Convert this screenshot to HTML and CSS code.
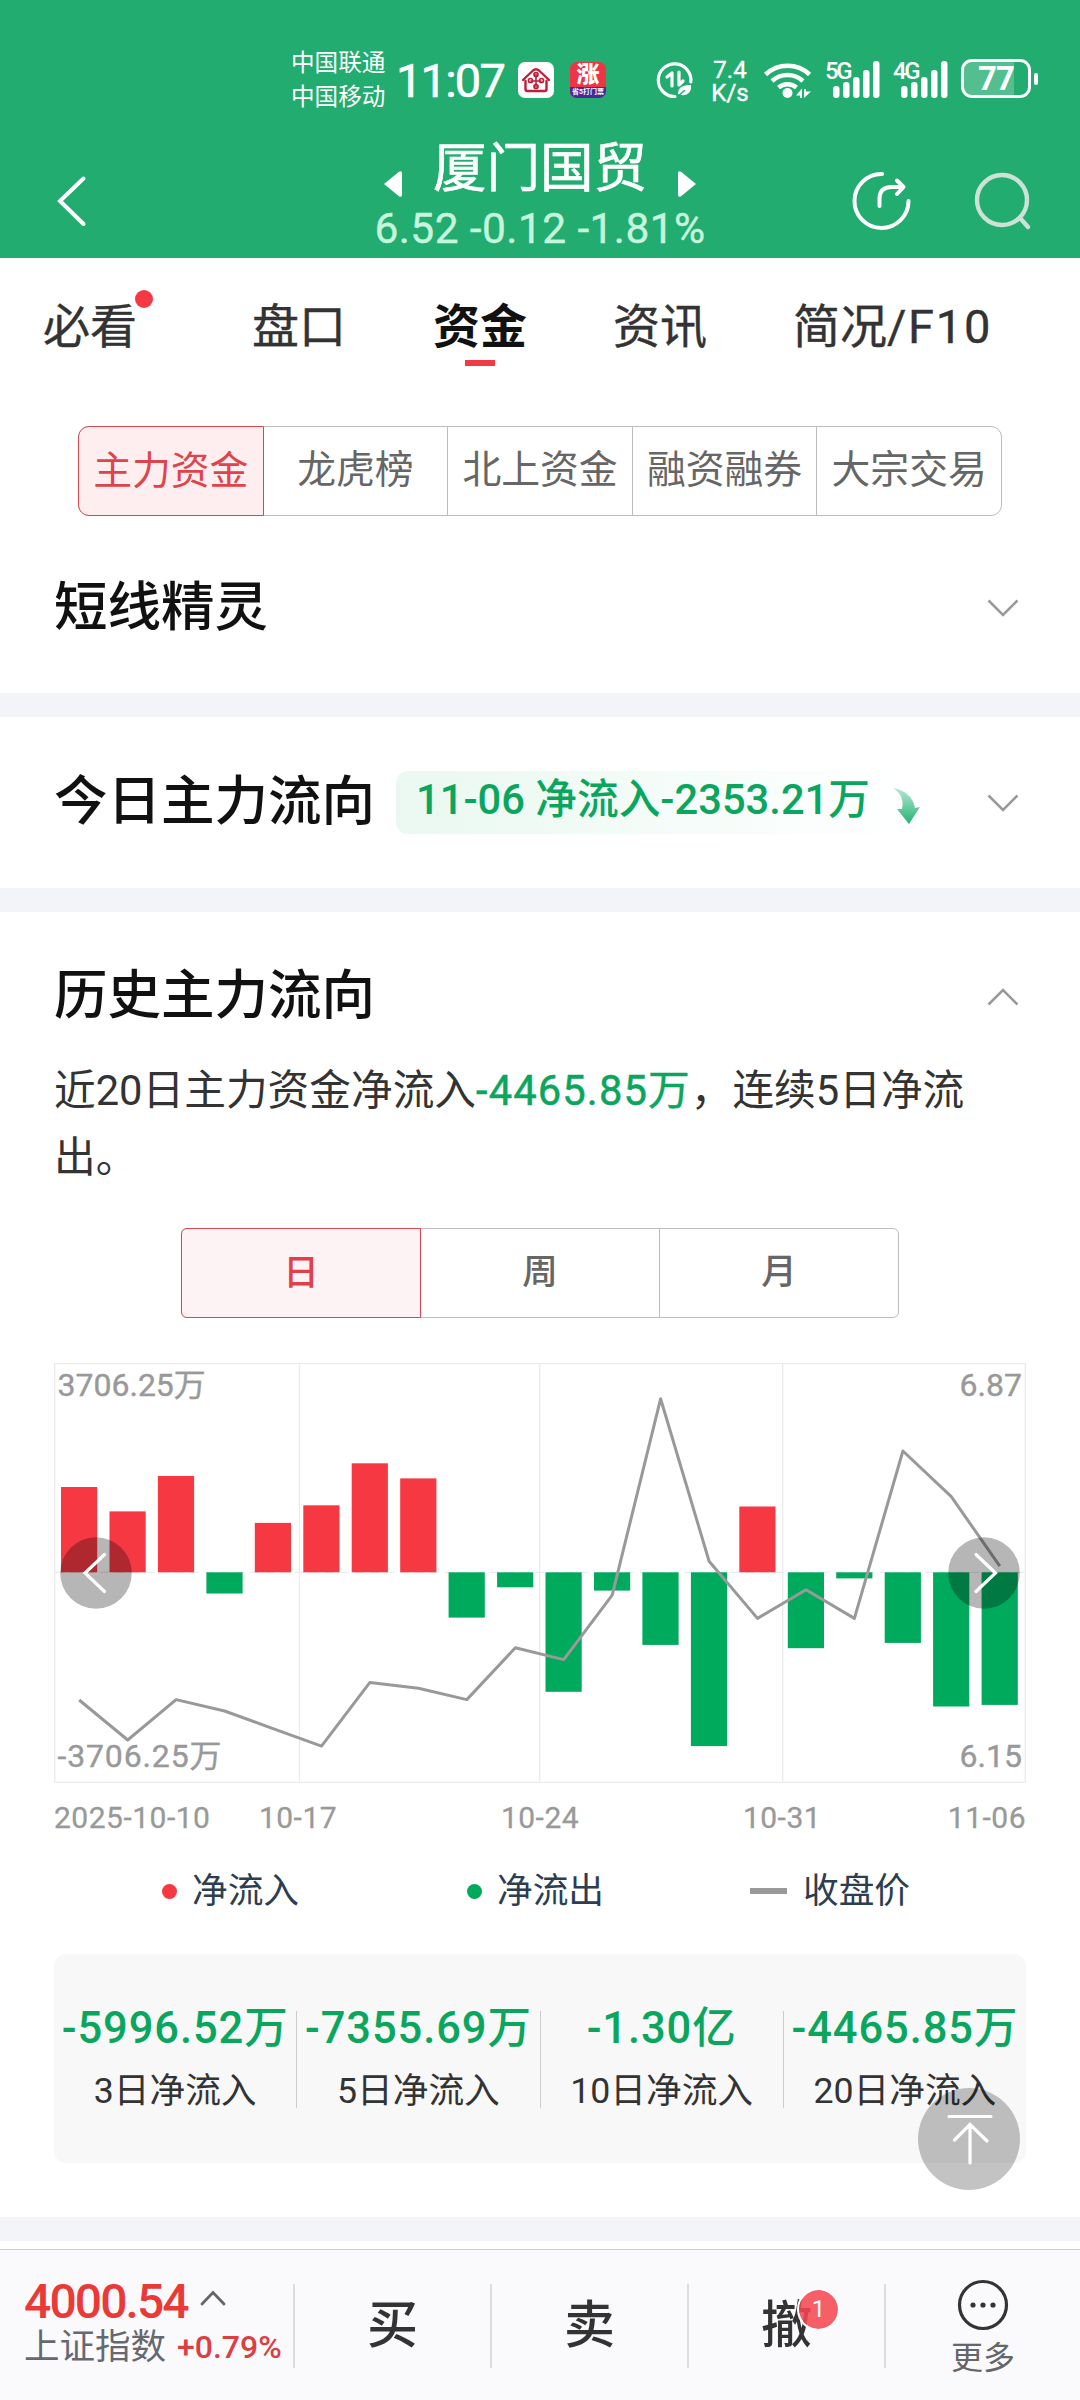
FILE: index.html
```html
<!DOCTYPE html>
<html lang="zh-CN">
<head>
<meta charset="utf-8">
<title>厦门国贸 资金</title>
<link rel="stylesheet" href="styles.css">
</head>
<body>
<header class="header">
  <div class="status">
    <div class="carriers"><span>中国联通</span><span>中国移动</span></div>
    <div class="clock">11:07</div>
    <svg class="app-icon" width="36" height="36" viewBox="0 0 36 36">
      <rect width="36" height="36" rx="7" fill="#fff"/>
      <g fill="none" stroke="#c01f3a" stroke-width="2.4" stroke-linejoin="round" stroke-linecap="round">
        <path d="M5 18 15 8.5Q18 6 21 8.500L31 18M7.500 19v8q0 2 2 2h17q2 0 2-2v-8"/>
        <path stroke-width="1.600" d="M13 19h10M18 12v13"/>
        <g stroke-width="1.700"><circle cx="18" cy="12.500" r="2"/><circle cx="18" cy="24.500" r="2"/><circle cx="12.500" cy="18.500" r="2"/><circle cx="23.500" cy="18.500" r="2"/></g>
      </g>
    </svg>
    <div class="rise-icon"><span class="rise-char">涨</span><span class="rise-base">省5打门票</span></div>
    <svg class="data-icon" width="38" height="38" viewBox="0 0 38 38" fill="none" stroke="#fff" stroke-width="3.200" stroke-linecap="round" stroke-linejoin="round">
      <path d="M19 35.500A16.300 16.300 0 1 1 34.800 21"/>
      <path d="M11 16l5-4v13M23 11v13l4-4"/>
      <path d="M22 33c0-7 5-9 13-9 1 7-4 11-10 10z" fill="#fff" stroke="none"/>
      <path d="M21.500 35.500l7-6" stroke="#22ac6f" stroke-width="1.500"/>
    </svg>
    <div class="speed"><span>7.4</span><span>K/s</span></div>
    <svg class="wifi" width="48" height="38" viewBox="0 0 48 38" fill="none" stroke="#fff" stroke-width="4.600">
      <path d="M1.600 13.500a32 32 0 0 1 44 0"/><path d="M8 20a23 23 0 0 1 31 0"/><path d="M14.500 26.500a14 14 0 0 1 18 0"/>
      <circle cx="23.500" cy="32" r="5" fill="#fff" stroke="none"/>
      <path d="M32 34.500l6-7v9.500h-2v-2.500zM40 28h2v2.500h5l-7 6.500z" fill="#fff" stroke="none"/>
    </svg>
    <div class="signal"><span>5G</span>
      <svg width="56" height="38" viewBox="0 0 56 38" fill="#fff"><rect x="8" y="25" width="6.500" height="12" rx="3"/><rect x="18" y="21" width="6.500" height="16" rx="3"/><rect x="28" y="16" width="6.500" height="21" rx="3"/><rect x="38" y="9" width="6.500" height="28" rx="3"/><rect x="48" y="0" width="6.500" height="37" rx="3"/></svg>
    </div>
    <div class="signal"><span>4G</span>
      <svg width="56" height="38" viewBox="0 0 56 38" fill="#fff"><rect x="8" y="25" width="6.500" height="12" rx="3"/><rect x="18" y="21" width="6.500" height="16" rx="3"/><rect x="28" y="16" width="6.500" height="21" rx="3"/><rect x="38" y="9" width="6.500" height="28" rx="3"/><rect x="48" y="0" width="6.500" height="37" rx="3"/></svg>
    </div>
    <div class="battery"><b>77</b></div><i class="battery-cap"></i>
  </div>
  <div class="navbar">
    <svg class="back" width="34" height="54" viewBox="0 0 34 54" fill="none" stroke="#fff" stroke-width="4" stroke-linecap="round"><path d="M27.500 4.500 4 27 27.500 50"/></svg>
    <div class="stock">
      <div class="stock-row">
        <svg class="tri" width="18" height="26" viewBox="0 0 18 26"><path d="M0 13 15 .8Q18-1 18 2.500v21Q18 27 15 25.200z" fill="#fff"/></svg>
        <h1>厦门国贸</h1>
        <svg class="tri" width="18" height="26" viewBox="0 0 18 26"><path d="M18 13 3 .8Q0-1 0 2.500v21Q0 27 3 25.200z" fill="#fff"/></svg>
      </div>
      <div class="quote">6.52 -0.12 -1.81%</div>
    </div>
    <svg class="share" width="60" height="60" viewBox="0 0 60 60" fill="none" stroke="#fff" stroke-width="4" stroke-linecap="round" stroke-linejoin="round"><path d="M31 3A27 27 0 1 0 57.500 30"/><path d="M28.500 35v-7q0-12 12-12h12M46 9.500l6.500 6.500-6.500 7"/></svg>
    <svg class="search" width="60" height="60" viewBox="0 0 60 60" fill="none" stroke="#cce2d7" stroke-width="4.400" stroke-linecap="round"><circle cx="29" cy="28" r="25"/><path d="M47 46l8 9"/></svg>
  </div>
</header>

<nav class="tabs">
  <span class="tab tab-new">必看</span><span class="tab">盘口</span><span class="tab active">资金</span><span class="tab">资讯</span><span class="tab">简况<span class="latin">/F10</span></span>
</nav>

<div class="segments">
  <span class="seg on">主力资金</span><span class="seg">龙虎榜</span><span class="seg">北上资金</span><span class="seg">融资融券</span><span class="seg">大宗交易</span>
</div>

<section class="card short">
  <h2>短线精灵</h2>
  <svg class="chev" width="32" height="20" viewBox="0 0 32 20"><path d="M1.500 1.500 16 16 30.500 1.500"/></svg>
</section>

<section class="card today">
  <h2>今日主力流向</h2>
  <div class="pill"><span>11-06 净流入-2353.21万</span>
    <svg width="28" height="38" viewBox="0 0 28 38"><defs><linearGradient id="fall" x1="0" y1="0" x2="0" y2="1"><stop offset="0" stop-color="#b5e8d2"/><stop offset="1" stop-color="#27b274"/></linearGradient></defs><path d="M0 1C12 3 20 10 22 21l5-1-11 17L4 22l5 0C11 13 8 6 0 1z" fill="url(#fall)"/></svg>
  </div>
  <svg class="chev" width="32" height="20" viewBox="0 0 32 20"><path d="M1.500 1.500 16 16 30.500 1.500"/></svg>
</section>

<section class="history">
  <div class="history-head">
    <h2>历史主力流向</h2>
    <svg class="chev" width="32" height="20" viewBox="0 0 32 20"><path d="M1.500 17.500 16 3 30.500 17.500"/></svg>
  </div>
  <p>近20日主力资金净流入<em>-4465.85万</em>，连续5日净流出。</p>
  <div class="period"><span class="on">日</span><span>周</span><span>月</span></div>

  <div class="chart">
    <svg width="972" height="420" viewBox="54 1363 972 420">
      <g fill="none" stroke="#ebebeb" stroke-width="1.300">
        <path d="M54.700 1363.700H1025.300V1782.300H54.700zM299.500 1364V1781M539.700 1364V1781M782.700 1364V1781"/>
        <path stroke-dasharray="9 6" d="M55 1572.300H1025"/>
      </g>
      <g fill="#f63842">
        <rect x="61" y="1487" width="36.200" height="85.300"/><rect x="109.500" y="1511.400" width="36.200" height="60.900"/><rect x="157.900" y="1476" width="36.200" height="96.300"/>
        <rect x="254.800" y="1522.900" width="36.200" height="49.400"/><rect x="303.300" y="1505.300" width="36.200" height="67"/><rect x="351.700" y="1463.300" width="36.200" height="109"/>
        <rect x="400.200" y="1478.400" width="36.200" height="93.900"/><rect x="739.300" y="1506.500" width="36.200" height="65.800"/>
      </g>
      <g fill="#00aa5d">
        <rect x="206.400" y="1572.300" width="36.200" height="21.200"/><rect x="448.600" y="1572.300" width="36.200" height="45.300"/><rect x="497.100" y="1572.300" width="36.200" height="15"/>
        <rect x="545.500" y="1572.300" width="36.200" height="119.500"/><rect x="594" y="1572.300" width="36.200" height="18.300"/><rect x="642.400" y="1572.300" width="36.200" height="72.600"/>
        <rect x="690.900" y="1572.300" width="36.200" height="173.800"/><rect x="787.800" y="1572.300" width="36.200" height="75.900"/><rect x="836.200" y="1572.300" width="36.200" height="6.100"/>
        <rect x="884.700" y="1572.300" width="36.200" height="70.600"/><rect x="933.100" y="1572.300" width="36.200" height="134.200"/><rect x="981.600" y="1572.300" width="36.200" height="132.600"/>
      </g>
      <polyline fill="none" stroke="#999" stroke-width="3" stroke-linejoin="round" points="79.200,1700 127.700,1740 176.100,1699.600 224.600,1711 273,1728.600 321.500,1746.100 369.900,1682.400 418.400,1688.200 466.800,1699.600 515.300,1647.800 563.700,1659.600 612.200,1595.100 660.600,1398.800 709.100,1561.200 757.500,1618.400 806,1589.800 854.400,1618.400 902.900,1451 951.300,1496.700 999.800,1566.100"/>
      <g class="scale"><text x="57.500" y="1395.500">3706.25万</text><text x="57.500" y="1767" textLength="164">-3706.25万</text><text x="1022" y="1395.500" text-anchor="end">6.87</text><text x="1022" y="1767" text-anchor="end">6.15</text></g>
      <g fill="#000" fill-opacity=".285"><circle cx="96" cy="1573" r="35.800"/><circle cx="984" cy="1573" r="35.800"/></g>
      <g fill="none" stroke="#fff" stroke-width="3.200" stroke-linecap="round"><path d="M104.500 1554.500 85 1573 104.500 1591.500M976 1554.500 995.500 1573 976 1591.500"/></g>
    </svg>
  </div>
  <div class="dates"><span>2025-10-10</span><span>10-17</span><span>10-24</span><span>10-31</span><span>11-06</span></div>
  <div class="legend">
    <span class="key"><i class="dot in"></i>净流入</span><span class="key"><i class="dot out"></i>净流出</span><span class="key"><i class="dash"></i>收盘价</span>
  </div>
  <div class="stats">
    <div class="stat"><b>-5996.52万</b><span>3日净流入</span></div>
    <div class="stat"><b>-7355.69万</b><span>5日净流入</span></div>
    <div class="stat"><b>-1.30亿</b><span>10日净流入</span></div>
    <div class="stat"><b>-4465.85万</b><span>20日净流入</span></div>
    <svg class="to-top" width="102" height="102" viewBox="0 0 102 102"><circle cx="51" cy="51" r="51" fill="#000" fill-opacity=".235"/><path d="M31 28.500h42M52 36v39M36.500 52 52 36.500 69 53" fill="none" stroke="#fff" stroke-width="3.200" stroke-linecap="round"/></svg>
  </div>
</section>

<footer class="footer">
  <div class="index">
    <div class="index-row"><b>4000.54</b><svg width="26" height="16" viewBox="0 0 26 16" fill="none" stroke="#666" stroke-width="2.800" stroke-linecap="round"><path d="M2 14 13 2.500 24 14"/></svg></div>
    <div class="index-name"><span>上证指数</span><em>+0.79%</em></div>
  </div>
  <div class="action">买</div>
  <div class="action">卖</div>
  <div class="action"><span class="cancel">撤<i class="badge">1</i></span></div>
  <div class="more">
    <svg width="52" height="52" viewBox="0 0 52 52"><circle cx="26" cy="26" r="23.500" fill="none" stroke="#333" stroke-width="3.200"/><g fill="#333"><circle cx="16" cy="26" r="2.600"/><circle cx="26" cy="26" r="2.600"/><circle cx="36" cy="26" r="2.600"/></g></svg>
    <span>更多</span>
  </div>
</footer>
</body>
</html>
```
FILE: styles.css
```css
* { box-sizing: border-box; }
body {
  margin: 0;
  width: 1080px;
  height: 2400px;
  overflow: hidden;
  background: #fff;
  color: #333;
  font-family: Roboto, "Noto Sans CJK SC", sans-serif;
  display: flex;
  flex-direction: column;
}
h1, h2, p { margin: 0; font-weight: 500; }
i, em { font-style: normal; }
svg { display: block; flex: none; }

.header { height: 258px; background: #22ac6f; color: #fff; flex: none; }
.status { display: flex; align-items: flex-start; height: 142px; padding: 44px 0 0 291px; }
.carriers { width: 105px; padding-top: 2px; display: flex; flex-direction: column; font-size: 23.600px; line-height: 34px; }
.clock { width: 122px; font-size: 47px; line-height: 74px; letter-spacing: -1.800px; font-weight: 400; -webkit-text-stroke: .6px #fff; }
.app-icon { margin-top: 18px; }
.rise-icon {
  width: 36px; height: 36px; margin: 18px 0 0 16px; border-radius: 7px; overflow: hidden;
  background: #ed3546; display: flex; flex-direction: column; align-items: center;
}
.rise-char { font-size: 23px; font-weight: 900; line-height: 26px; height: 25px; }
.rise-base { width: 36px; height: 11px; background: #4b2798; font-size: 7px; line-height: 10px; font-weight: 700; text-align: center; white-space: nowrap; }
.data-icon { margin: 17px 0 0 50px; }
.speed { width: 36px; margin: 15px 0 0 18px; display: flex; flex-direction: column; align-items: center; font-size: 24px; line-height: 23px; font-weight: 400; -webkit-text-stroke: .4px #fff; }
.wifi { margin: 17px 0 0 16px; }
.signal { margin: 17px 0 0 13px; width: 56px; position: relative; }
.signal + .signal { margin-left: 12px; }
.signal span { position: absolute; left: 0; top: -2px; font-size: 24px; line-height: 24px; letter-spacing: -2.500px; font-weight: 500; }
.battery {
  width: 70px; height: 39px; margin: 15px 0 0 12px; border: 3px solid #fff; border-radius: 11px;
  background: linear-gradient(90deg, #53bf8e 50px, transparent 50px);
  font-size: 33px; line-height: 34px; text-align: center; letter-spacing: -1px;
}
.battery-cap { width: 4px; height: 12px; margin: 29px 0 0 3px; border-radius: 2px; background: #fff; }

.navbar { display: flex; align-items: flex-start; height: 116px; padding-left: 54px; }
.back { margin: 32px 284px 0 2px; }
.stock { width: 332px; }
.stock-row { display: flex; justify-content: space-between; padding: 0 10px 0 10px; }
.tri { margin-top: 29px; }
h1 { font-size: 53.500px; line-height: 54px; height: 50px; font-weight: 400; -webkit-text-stroke: .6px #fff; }
.quote { text-align: center; color: #c6f5de; font-size: 42.500px; line-height: 50px; margin-top: 7px; white-space: nowrap; letter-spacing: .4px; -webkit-text-stroke: .4px #c6f5de; }
.share { margin: 29px 0 0 145px; }
.search { margin: 30px 0 0 62px; }

.tabs { height: 168px; padding: 34px 0 0 43px; display: flex; flex: none; font-size: 47px; line-height: 70px; -webkit-text-stroke: .4px #333; }
.latin { letter-spacing: 1.700px; }
.tab { position: relative; white-space: nowrap; }
.tab:nth-child(1) { margin-right: 115px; }
.tab:nth-child(2) { margin-right: 87px; }
.tab:nth-child(3) { margin-right: 86px; }
.tab:nth-child(4) { margin-right: 86px; }
.tab.active { color: #111; font-weight: 700; -webkit-text-stroke: 0; }
.tab.active::after { content: ""; position: absolute; left: 32px; top: 68px; width: 30px; height: 6px; background: #f03b45; }
.tab-new::after { content: ""; position: absolute; left: 92px; top: -2px; width: 18px; height: 18px; border-radius: 50%; background: #f63842; }

.segments { display: flex; flex: none; width: 924px; height: 90px; margin-left: 78px; border: 1px solid #bdbdbd; border-radius: 11px; }
.seg { flex: 1; text-align: center; font-size: 38.800px; line-height: 85px; color: #666; border-left: 1px solid #bdbdbd; white-space: nowrap; }
.seg.on { margin: -1px 0; height: 90px; line-height: 87px; margin-left: -1px; border: 1px solid #d9484f; border-radius: 11px 0 0 11px; color: #dd444b; background: #feeeef; }
.seg.on + .seg { border-left: 0; }

h2 { font-size: 53.500px; line-height: 80px; color: #111; white-space: nowrap; }
.chev { fill: none; stroke: #999; stroke-width: 2.500; margin: 0 7px 0 auto; }
.card { display: flex; align-items: flex-start; flex: none; padding: 0 54px; border-bottom: 24px solid #f3f4f9; }
.short { height: 201px; padding-top: 52px; }
.short .chev { margin-top: 31px; }
.today { height: 195px; padding-top: 45px; }
.today .chev { margin-top: 32px; }
.pill { display: flex; margin: 9px 0 0 21px; height: 63px; width: 526px; padding-left: 20px; border-radius: 12px; background: linear-gradient(90deg, #eaf8f1, #fff); color: #0ba65e; font-size: 41.700px; line-height: 58px; font-weight: 500; white-space: nowrap; }
.pill svg { margin: 16px 0 0 23px; }

.history { flex: none; height: 1329px; padding: 44px 54px 0; border-bottom: 24px solid #f3f4f9; }
.history-head { display: flex; height: 101px; align-items: flex-start; }
.history-head .chev { margin-top: 31px; }
.history p { height: 133px; font-size: 41.700px; line-height: 67px; font-weight: 400; }
.history p em { color: #0ba65e; letter-spacing: 1.100px; -webkit-text-stroke: .5px #0ba65e; }
.period { display: flex; width: 718px; height: 90px; margin: 38px 0 0 127px; border: 1px solid #bdbdbd; border-radius: 6px; }
.period span { flex: 1; text-align: center; font-size: 35.500px; line-height: 87px; font-weight: 500; color: #666; border-left: 1px solid #bdbdbd; }
.period .on { margin: -1px 0 -1px -1px; line-height: 88px; border: 1px solid #d9484f; border-radius: 6px 0 0 6px; color: #e04048; background: #fdf2f4; }
.period .on + span { border-left: 0; }
.chart { height: 420px; margin-top: 45px; }
.scale { fill: #999; font-size: 32px; stroke: #999; stroke-width: .4; }
.dates { display: grid; grid-template-columns: 202px 84px 400px 84px 202px; height: 70px; color: #999; font-size: 30px; line-height: 70px; letter-spacing: .5px; text-align: center; -webkit-text-stroke: .3px #999; }
.dates span:first-child { text-align: left; }
.dates span:last-child { text-align: right; }
.legend { display: flex; height: 74px; padding-left: 108px; font-size: 35.700px; line-height: 72px; color: #2c3e50; }
.key { display: flex; align-items: center; flex: none; width: 305px; height: 76px; }
.key:nth-child(2) { width: 283px; }
.key:nth-child(3) { width: 200px; }
.dot { width: 15px; height: 15px; border-radius: 50%; margin-right: 15px; }
.in { background: #f63842; }
.out { background: #00aa5d; }
.dash { width: 37px; height: 6px; margin-right: 16px; background: #999; }
.stats { position: relative; display: flex; height: 209px; margin-top: 27px; padding-top: 57px; border-radius: 12px; background: #f8f8f8; }
.stat { flex: 1; height: 97px; display: flex; flex-direction: column; align-items: center; white-space: nowrap; }
.stat + .stat { border-left: 1px solid #ccc; }
.stat b { font-size: 43.500px; line-height: 36px; font-weight: 500; color: #0ba65e; letter-spacing: .9px; }
.stat span { font-size: 35.700px; line-height: 54px; margin-top: 17px; }
.to-top { position: absolute; left: 864px; top: 134px; }

.footer { display: flex; flex: none; height: 151px; margin-top: 8px; border-top: 1px solid #ccc; background: #fafafc; padding-top: 34px; }
.index { width: 293px; padding-left: 24px; white-space: nowrap; }
.index-row { display: flex; height: 42px; color: #e93a38; }
.index-row b { width: 176px; font-size: 48px; line-height: 36px; font-weight: 500; letter-spacing: -1.900px; }
.index-row svg { margin-top: 6px; }
.index-name { display: flex; gap: 11px; font-size: 35.500px; line-height: 42px; color: #666870; }
.index-name em { font-size: 32px; line-height: 43px; color: #dd3e40; font-weight: 500; }
.action { width: 197px; height: 84px; border-left: 2px solid #dcdcdc; text-align: center; font-size: 51px; line-height: 83px; font-weight: 500; }
.cancel { position: relative; }
.badge { position: absolute; left: 36px; top: -8px; width: 43px; height: 43px; border: 2px solid #fff; border-radius: 50%; background: rgba(245, 70, 82, .87); background-clip: padding-box; color: #fff; font-size: 24px; line-height: 39px; font-weight: 400; }
.more { flex: 1; height: 84px; border-left: 2px solid #dcdcdc; display: flex; flex-direction: column; align-items: center; font-size: 32px; line-height: 40px; color: #666; }
.more svg { margin: -5px 0 7px; }
```
